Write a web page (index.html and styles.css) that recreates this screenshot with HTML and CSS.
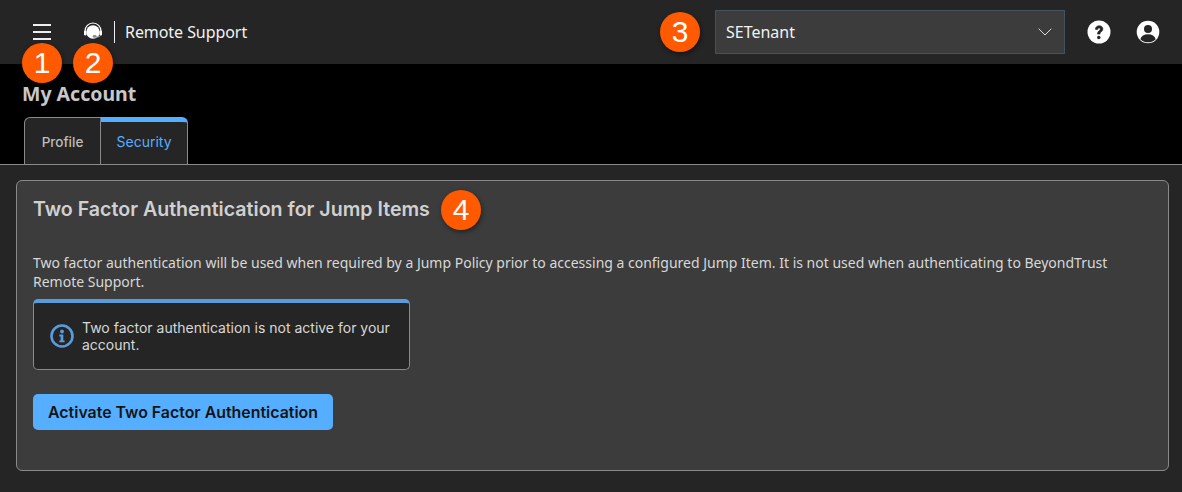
FILE: index.html
```html
<!DOCTYPE html>
<html lang="en">
<head>
<meta charset="utf-8">
<title>My Account</title>
<link rel="stylesheet" href="styles.css">
</head>
<body>
<header class="topbar">
  <button class="menu" aria-label="Menu"><span></span><span></span><span></span></button>
  <svg class="logo" width="20" height="20" viewBox="0 0 20 20" aria-hidden="true">
    <circle cx="10" cy="10" r="6.800" fill="#fff"/>
    <path d="M2 11V9a8 8 0 0 1 16 0v2" fill="none" stroke="#fff" stroke-width="1.200"/>
    <rect x="1" y="8.500" width="2.400" height="5" rx="1.200" fill="#fff"/>
    <rect x="16.600" y="8.500" width="2.400" height="5" rx="1.200" fill="#fff"/>
    <path d="M17.800 13c-.4 1.500-2.200 2-5 2" fill="none" stroke="#aaa" stroke-width="1"/>
    <ellipse cx="11.600" cy="14.400" rx="2" ry="1.300" fill="#8a8a8a"/>
  </svg>
  <span class="brand">Remote Support</span>
  <div class="tenant"><span>SETenant</span>
    <svg width="14" height="8" viewBox="0 0 14 8" aria-hidden="true"><path d="M.7.7 7 7l6.300-6.300" fill="none" stroke="#ddd" stroke-width="1"/></svg>
  </div>
  <svg class="help" width="24" height="24" viewBox="0 0 24 24" aria-hidden="true">
    <circle cx="12" cy="12" r="11.500" fill="#fff"/>
    <path d="M8.300 9.300c.2-2.300 1.800-3.600 3.900-3.600s3.700 1.300 3.700 3.200c0 2.700-2.900 2.600-2.900 5.200h-2.500c0-3.400 2.800-3.300 2.800-5 0-.8-.5-1.200-1.200-1.200-.9 0-1.300.6-1.400 1.700z" fill="#252525" stroke="#252525" stroke-width=".6"/>
    <circle cx="11.800" cy="17.500" r="1.700" fill="#252525"/>
  </svg>
  <svg class="user" width="24" height="24" viewBox="0 0 24 24" aria-hidden="true">
    <circle cx="12" cy="12" r="11.300" fill="#fff"/>
    <circle cx="12" cy="9" r="4" fill="#252525"/>
    <path d="M4.300 19.200c1-3.400 3.700-5 7.700-5s6.700 1.600 7.700 5c-1.800 2-4.600 3.100-7.700 3.100s-5.900-1.100-7.700-3.100z" fill="#252525"/>
  </svg>
</header>
<section class="band">
  <h1>My Account</h1>
  <nav class="tabs">
    <a class="tab">Profile</a>
    <a class="tab active">Security</a>
  </nav>
</section>
<main class="content">
  <section class="card">
    <h2>Two Factor Authentication for Jump Items</h2>
    <p class="lead">Two factor authentication will be used when required by a Jump Policy prior to accessing a configured Jump Item. It is not used when authenticating to BeyondTrust Remote Support.</p>
    <div class="notice">
      <svg width="24" height="24" viewBox="0 0 24 24" aria-hidden="true">
        <circle cx="12" cy="12" r="10.500" fill="none" stroke="#5b9bdc" stroke-width="2.600"/>
        <circle cx="12" cy="7.500" r="1.900" fill="#5b9bdc"/>
        <path d="M9.300 10.600h4v5.800h1.300v1.800H9.300v-1.800h1.300v-4H9.300z" fill="#5b9bdc"/>
      </svg>
      <p>Two factor authentication is not active for your account.</p>
    </div>
    <button class="activate">Activate Two Factor Authentication</button>
  </section>
</main>
<span class="badge b1">1</span>
<span class="badge b2">2</span>
<span class="badge b3">3</span>
<span class="badge b4">4</span>
</body>
</html>
```
FILE: styles.css
```css
* { box-sizing: border-box; }
html, body { margin: 0; padding: 0; }
body {
  width: 1182px;
  height: 492px;
  overflow: hidden;
  background: #252525;
  font-family: "Noto Sans", sans-serif;
  color: #ddd;
}
.topbar {
  height: 64px;
  background: #252525;
  display: flex;
  align-items: center;
  padding: 0 22px 0 33px;
}
.menu {
  width: 18px;
  height: 16px;
  padding: 0;
  border: 0;
  background: none;
  display: flex;
  flex-direction: column;
  justify-content: space-between;
}
.menu span { display: block; height: 2px; background: #eee; }
.logo { margin-left: 32px; }
.brand {
  margin-left: 11px;
  padding-left: 10px;
  border-left: 1px solid #eee;
  height: 22px;
  line-height: 23px;
  font-size: 16px;
  letter-spacing: -.004em;
  color: #f2f2f2;
}
.tenant {
  margin-left: auto;
  width: 350px;
  height: 44px;
  background: #3c3c3c;
  border: 1px solid #44525f;
  display: flex;
  align-items: center;
  justify-content: space-between;
  padding: 0 12px 0 10px;
  font-size: 16px;
  color: #f2f2f2;
}
.help { margin-left: 22px; }
.user { margin-left: 25px; }
.band {
  height: 101px;
  background: #000;
  border-bottom: 1px solid #8a8a8a;
  position: relative;
  display: flex;
  flex-direction: column;
  padding: 16px 0 0 22px;
}
h1 {
  margin: 0;
  font-size: 19.500px;
  line-height: 28px;
  font-weight: 700;
  color: #c8c8c8;
}
.tabs { display: flex; margin-top: 9px; padding-left: 2px; }
.tab {
  height: 47px;
  background: #252525;
  border: 1px solid #8a8a8a;
  border-bottom: 0;
  font-family: Inter, sans-serif;
  font-size: 13.500px;
  font-weight: 500;
  color: #bdbdbd;
  display: flex;
  align-items: center;
  justify-content: center;
}
.tab:first-child { width: 76px; border-radius: 6px 0 0 0; border-right: 0; padding-top: 1px; }
.tab.active {
  width: 88px;
  border-left: 1px solid #8a8a8a;
  border-top: 5px solid #55aeff;
  border-radius: 0 6px 0 0;
  color: #55aeff;
  font-size: 14px;
  font-weight: 400;
  padding-bottom: 3px;
}
.content { padding: 15px 13px 0 16px; }
.card {
  height: 291px;
  background: #3c3c3c;
  border: 1px solid #8a8a8a;
  border-radius: 6px;
  padding: 0 16px;
}
h2 {
  margin: 15px 0 0;
  font-family: Inter, sans-serif;
  font-size: 19.600px;
  line-height: 26px;
  font-weight: 600;
  color: #d0d0d0;
}
.lead {
  margin: 31px 0 0;
  font-size: 14px;
  line-height: 19px;
  color: #d8d8d8;
}
.notice {
  width: 377px;
  height: 71px;
  margin-top: 8px;
  background: #252525;
  border: 1px solid #8a8a8a;
  border-top: 4px solid #5b9bdc;
  border-radius: 5px;
  display: flex;
  align-items: center;
  padding: 0 16px;
  gap: 8px;
  font-family: Inter, sans-serif;
  font-size: 14px;
  line-height: 17px;
  color: #d8d8d8;
}
.notice svg { flex: none; }
.notice p { margin: 0; }
.activate {
  display: block;
  width: 300px;
  height: 36px;
  margin-top: 24px;
  border: 0;
  border-radius: 5px;
  background: #55aeff;
  font-family: Inter, sans-serif;
  font-size: 15.900px;
  font-weight: 600;
  color: #141414;
  padding: 0;
}
.badge {
  position: absolute;
  width: 40px;
  height: 40px;
  border-radius: 50%;
  background: #ff5a00;
  color: #fff;
  font-family: "Liberation Sans", sans-serif;
  font-size: 30px;
  line-height: 40px;
  text-align: center;
  box-shadow: 1px 2px 5px rgba(0,0,0,.45);
}
.b1 { left: 22px; top: 43px; }
.b2 { left: 73px; top: 43px; }
.b3 { left: 660px; top: 12px; }
.b4 { left: 441px; top: 190px; }
```
